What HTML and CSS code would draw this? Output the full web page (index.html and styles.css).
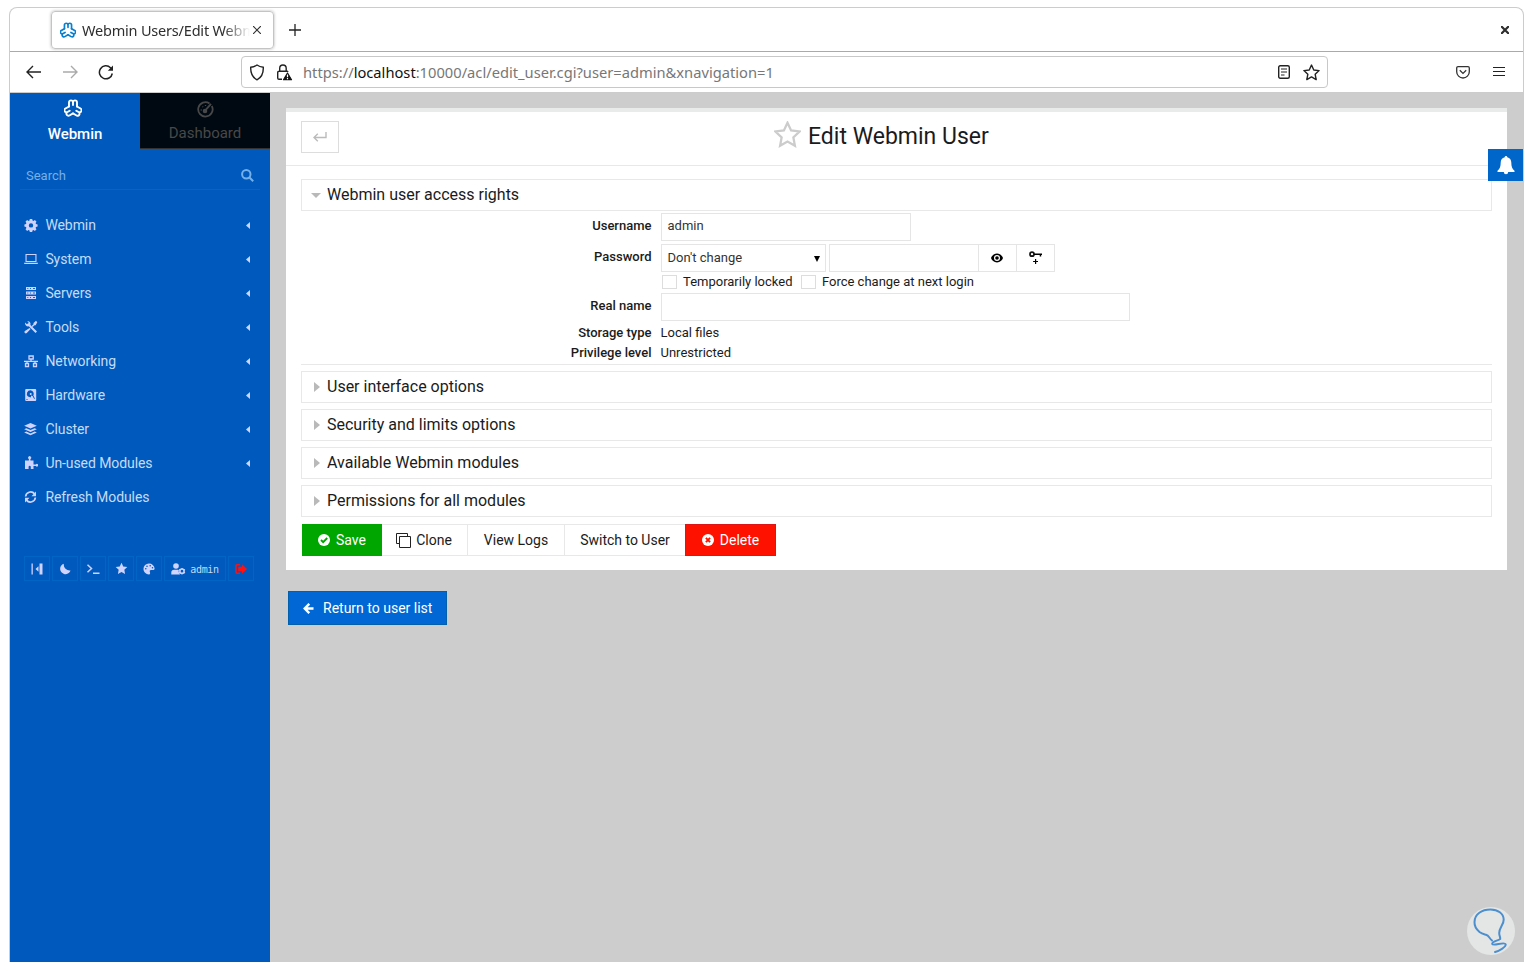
FILE: index.html
```html
<!DOCTYPE html>
<html lang="en">
<head>
    <meta charset="UTF-8">
    <meta name="viewport" content="width=device-width, initial-scale=1.0">
    <title>Webmin Users/Edit Webmin User</title>
    <link rel="stylesheet" href="styles.css">
</head>
<body>
    <!-- shared icons -->
    <svg class="defs" width="0" height="0">
        <symbol id="logo" viewBox="0 0 18 18">
            <g fill="none" stroke="currentColor" stroke-width="1.900" stroke-linecap="round" stroke-linejoin="round">
                <path id="lobe" d="M5 7.500V3.400a2 2 0 0 1 4 0V6M9 3.400a2 2 0 0 1 4 0V7.500"/>
                <use href="#lobe" transform="rotate(120 9 9.800)"/>
                <use href="#lobe" transform="rotate(240 9 9.800)"/>
            </g>
        </symbol>
        <symbol id="star" viewBox="0 0 24 24">
            <path d="M12 1.500l3.200 6.900 7.500.9-5.500 5.200 1.400 7.500-6.600-3.700-6.600 3.700 1.400-7.500L1.300 9.300l7.500-.9z"/>
        </symbol>
        <symbol id="right" viewBox="0 0 6 10"><path d="M0 0l6 5-6 5z"/></symbol>
        <symbol id="left" viewBox="0 0 4 7"><path d="M4 0v7L0 3.500z"/></symbol>
    </svg>

    <div class="window">
        <div class="tabbar">
            <div class="tab">
                <svg class="tab-logo" width="16" height="16"><use href="#logo"/></svg>
                <span class="tab-title">Webmin Users/Edit Webmin User</span>
                <svg width="8" height="8" viewBox="0 0 8 8" stroke="#333" stroke-width="1.2"><path d="M0 0l8 8M8 0L0 8"/></svg>
            </div>
            <svg class="new-tab" width="12" height="12" viewBox="0 0 12 12" stroke="#222" stroke-width="1.3"><path d="M6 0v12M0 6h12"/></svg>
            <svg class="close" width="8" height="8" viewBox="0 0 8 8" stroke="#2e2e2e" stroke-width="2.200"><path d="M0 0l8 8M8 0L0 8"/></svg>
        </div>

        <div class="navbar">
            <svg class="nav-back" width="16" height="14" viewBox="0 0 16 14" fill="none" stroke="#222" stroke-width="1.400"><path d="M15 7H1.500M7 1L1 7l6 6"/></svg>
            <svg class="nav-next" width="16" height="14" viewBox="0 0 16 14" fill="none" stroke="#aaa" stroke-width="1.400"><path d="M1 7h13.500M9 1l6 6-6 6"/></svg>
            <svg class="nav-reload" width="16" height="16" viewBox="0 0 16 16" fill="none" stroke="#222" stroke-width="1.500"><path d="M14.300 9.500A6.500 6.500 0 1 1 12.500 3.700l1.500 1.500"/><path d="M15 1.500v5.200H9.800z" fill="#222" stroke="none"/></svg>
            <div class="urlbar">
                <svg width="16" height="17" viewBox="0 0 16 17" fill="none" stroke="#222" stroke-width="1.400"><path d="M8 1c2 1.400 4 2 6.300 2.300C14.500 9 12.500 13.500 8 15.800 3.500 13.500 1.500 9 1.700 3.300 4 3 6 2.400 8 1z"/></svg>
                <svg class="lock" width="17" height="17" viewBox="0 0 17 17" fill="none" stroke="#222" stroke-width="1.400"><path d="M6 15.300H3a1.300 1.300 0 0 1-1.300-1.300V8.500A1.300 1.300 0 0 1 3 7.200h8.200a1 1 0 0 1 .8.700M3.700 7V4.300a3 3 0 0 1 6.500 0V7"/><path d="M11.500 9L15.500 15.700H7.500z" fill="#111" stroke="#111" stroke-width="1.200" stroke-linejoin="round"/><path d="M11.500 10.500v2.700M11.500 14v1.200" stroke="#fff" stroke-width="1.200"/></svg>
                <span class="url">https://<b>localhost</b>:10000/acl/edit_user.cgi?user=admin&amp;xnavigation=1</span>
                <svg class="reader" width="12" height="14" viewBox="0 0 12 14" fill="none" stroke="#222" stroke-width="1.400"><rect x=".7" y=".7" width="10.600" height="12.600" rx="1.500"/><path d="M3 4h6M3 7h6M3 10h3.500" stroke-width="1.200"/></svg>
                <svg width="17" height="17" fill="none" stroke="#222" stroke-width="2" stroke-linejoin="round"><use href="#star"/></svg>
            </div>
            <svg class="pocket" width="14" height="13" viewBox="0 0 14 13" fill="none" stroke="#333" stroke-width="1.300"><path d="M2 .7h10a1.300 1.300 0 0 1 1.300 1.300v3.700a6.300 6.300 0 0 1-12.600 0V2A1.300 1.300 0 0 1 2 .7z"/><path d="M3.800 4.300L7 7.400l3.200-3.100"/></svg>
            <svg class="burger" width="12" height="10" viewBox="0 0 12 10" stroke="#222" stroke-width="1"><path d="M0 .5h12M0 4.500h12M0 8.500h12"/></svg>
        </div>

        <div class="page">
            <aside class="sidebar">
                <div class="switch">
                    <div class="switch-item active">
                        <svg width="18" height="18"><use href="#logo"/></svg>
                        <span>Webmin</span>
                    </div>
                    <div class="switch-item">
                        <svg width="17" height="17" viewBox="0 0 17 17" fill="none" stroke="currentColor" stroke-width="1.800"><path d="M12.500 2.400A7.200 7.200 0 1 0 14.800 5"/><path d="M8.500 9.200L14 2.800"/><circle cx="8" cy="10" r="1.400" fill="currentColor"/><path d="M3.700 9h1M5.500 5.500l.6.600M8.500 4v1" stroke-width="1.300"/></svg>
                        <span>Dashboard</span>
                    </div>
                </div>

                <div class="search">
                    <span>Search</span>
                    <svg width="13" height="13" viewBox="0 0 13 13" fill="none" stroke="currentColor" stroke-width="2"><circle cx="5.300" cy="5.300" r="4.200"/><path d="M8.500 8.500l3.700 3.700"/></svg>
                </div>

                <ul class="menu">
                    <li>
                        <svg width="14" height="14" viewBox="0 0 14 14"><path fill-rule="evenodd" d="M5.800 1h2.400l.3 1.600 1 .4 1.400-.9 1.600 1.600-.9 1.400.4 1 1.600.3v2.200l-1.600.3-.4 1 .9 1.400-1.600 1.600-1.400-.9-1 .4-.3 1.600H5.800l-.3-1.600-1-.4-1.400.9-1.600-1.600.9-1.400-.4-1L.4 8.600V6.400L2 6.100l.4-1-.9-1.400 1.600-1.600 1.400.9 1-.4zM7 5.200a2.200 2.200 0 1 0 0 4.400 2.200 2.200 0 0 0 0-4.400z"/></svg>
                        <span>Webmin</span>
                        <svg class="arrow" width="4" height="7"><use href="#left"/></svg>
                    </li>
                    <li>
                        <svg width="14" height="14" viewBox="0 0 14 14"><path fill-rule="evenodd" d="M1.500 2h11v8h-11zM2.600 3.100v5.800h8.800V3.100zM0 10.800h14v.6l-.8.600H.8l-.8-.6z"/></svg>
                        <span>System</span>
                        <svg class="arrow" width="4" height="7"><use href="#left"/></svg>
                    </li>
                    <li>
                        <svg width="14" height="14" viewBox="0 0 14 14"><path d="M2 1h10v3H2zM2 5.500h10v3H2zM2 10h10v3H2z"/><path stroke="#0059bc" stroke-width=".9" d="M3.300 2.500h1M6 2.500h1M9 2.500h2M3.300 7h1M6 7h1M9 7h2M3.300 11.500h1M6 11.500h1M9 11.500h2"/></svg>
                        <span>Servers</span>
                        <svg class="arrow" width="4" height="7"><use href="#left"/></svg>
                    </li>
                    <li>
                        <svg width="14" height="14" viewBox="0 0 14 14"><path d="M1 2.600L2.600 4 4.300 3.600 4.500 2 3 .9a3.200 3.200 0 0 1 3.400 4L13 11.500 11.500 13 4.800 6.300A3.200 3.200 0 0 1 1 2.600z"/><path d="M13.300 2.200L12 .8 9.500 3v1.200L7.600 6.100l1 1L10.500 5.200h1.100zM5.600 8l1 1-3.800 4a1.300 1.300 0 0 1-1.900-1.900z"/></svg>
                        <span>Tools</span>
                        <svg class="arrow" width="4" height="7"><use href="#left"/></svg>
                    </li>
                    <li>
                        <svg class="outline" width="14" height="14" viewBox="0 0 14 14"><path d="M5 2h4.200v3H5zM1.500 9.500h3v3h-3zM9.500 9.500h3v3h-3zM7 5v2.200M0 7.300h14M3 7.300v2M11 7.300v2"/></svg>
                        <span>Networking</span>
                        <svg class="arrow" width="4" height="7"><use href="#left"/></svg>
                    </li>
                    <li>
                        <svg width="14" height="14" viewBox="0 0 14 14"><path fill-rule="evenodd" d="M2.200 1h9a1 1 0 0 1 1 1v10a1 1 0 0 1-1 1h-9a1 1 0 0 1-1-1V2a1 1 0 0 1 1-1zM6.700 2.200A3.700 3.700 0 0 0 4 8.600l2.700 1 .5-2.100 1.300.5 1.700 3 .7-.6-1.600-2.800a3.700 3.700 0 0 0-2.600-5.400zM6.700 5a1 1 0 1 1 0 2 1 1 0 0 1 0-2zM2.500 11h1v1h-1z"/></svg>
                        <span>Hardware</span>
                        <svg class="arrow" width="4" height="7"><use href="#left"/></svg>
                    </li>
                    <li>
                        <svg width="14" height="14" viewBox="0 0 14 14"><path d="M6.500 1l6.300 2.800-6.300 2.700L.2 3.800zM2.300 6.200l4.200 1.800 4.200-1.800 2.100 1-6.300 2.700L.2 7.200zM2.300 9.600l4.200 1.800 4.200-1.800 2.100 1-6.300 2.700-6.300-2.700z"/></svg>
                        <span>Cluster</span>
                        <svg class="arrow" width="4" height="7"><use href="#left"/></svg>
                    </li>
                    <li>
                        <svg width="14" height="14" viewBox="0 0 14 14"><path d="M1 4.500h3.900V3a1.500 1.500 0 1 1 1.500 0v1.500H9.500v4h2.400a1.300 1.300 0 1 1 0 1.500H9.500V13H6.800v-2.500a1.400 1.400 0 0 0-2.200 0V13H1z"/></svg>
                        <span>Un-used Modules</span>
                        <svg class="arrow" width="4" height="7"><use href="#left"/></svg>
                    </li>
                    <li>
                        <svg width="14" height="14" viewBox="0 0 14 14"><path fill="none" stroke="currentColor" stroke-width="1.700" d="M1.600 6.500a5 5 0 0 1 8.900-2.600M11.400 7.500a5 5 0 0 1-8.900 2.600"/><path d="M12 1.500v4.700H7.500zM1 12.500V7.800h4.500z"/></svg>
                        <span>Refresh Modules</span>
                    </li>
                </ul>

                <div class="tools">
                    <div class="tool"><svg width="12" height="12" viewBox="0 0 12 12"><path d="M.5.500h1.300v11H.5zM8.500.500h3v11h-3zM7.500 3.300v5.400L4.500 6z"/></svg></div>
                    <div class="tool"><svg width="12" height="12" viewBox="0 0 12 12"><path d="M4.800.8A6 6 0 0 0 11.500 7.500 5.300 5.300 0 1 1 4.800.8z"/></svg></div>
                    <div class="tool"><svg width="14" height="12" viewBox="0 0 14 12"><path fill="none" stroke="currentColor" stroke-width="1.500" d="M1.500 1.800L5.500 5.500 1.500 9.200M7 10.200H13.500"/></svg></div>
                    <div class="tool"><svg width="13" height="13"><use href="#star"/></svg></div>
                    <div class="tool"><svg width="12" height="12" viewBox="0 0 12 12"><path fill-rule="evenodd" d="M6 .5a5.600 5.600 0 0 1 5.600 5c0 1.300-.8 1.600-1.800 1.600H8c-1 0-1.500.8-1.200 1.600.4 1 .7 2.800-.9 2.800A5.500 5.500 0 0 1 6 .5zM2.800 5a.8.800 0 1 0 0 1.600.8.800 0 0 0 0-1.600zM4 2.400A.8.800 0 1 0 4 4a.8.800 0 0 0 0-1.600zm3.200-.4a.8.800 0 1 0 0 1.600.8.800 0 0 0 0-1.600zm2.300 2a.8.800 0 1 0 0 1.600.8.800 0 0 0 0-1.600z"/></svg></div>
                    <div class="tool user">
                        <svg width="15" height="12" viewBox="0 0 15 12"><circle cx="5" cy="3" r="2.800"/><path d="M.3 11.500V9.400a2.800 2.800 0 0 1 2.800-2.700h3.700l1 .4a4 4 0 0 0 1.200 4.400z"/><circle cx="11" cy="8.200" r="2.100" fill="none" stroke="currentColor" stroke-width="1.500"/><path d="M11 5v1.500M11 10v1.500M8 6.500l1.200.6M12.800 9.200l1.200.7M8 9.900l1.200-.7M12.800 7.200l1.200-.7" stroke="currentColor" stroke-width="1.200"/></svg>
                        <span>admin</span>
                    </div>
                    <div class="tool logout"><svg width="12" height="12" viewBox="0 0 12 12"><path fill="none" stroke="currentColor" stroke-width="1.500" d="M5 1.700H2.200A1.200 1.200 0 0 0 1 2.900v6.200a1.200 1.200 0 0 0 1.200 1.200H5"/><path d="M3.200 3.800H7V1.300L12 6l-5 4.700V8.200H3.200z"/></svg></div>
                </div>
            </aside>

            <main class="content">
                <div class="panel">
                    <div class="panel-head">
                        <div class="back"><svg width="14" height="10" viewBox="0 0 14 10" fill="none" stroke="#bbb" stroke-width="1.400"><path d="M13 0v5.500H1.500M4.800 1.700L1 5.500l3.800 3.800"/></svg></div>
                        <h1>
                            <svg width="27" height="27" fill="none" stroke="#ccc" stroke-width="2"><use href="#star"/></svg>
                            <span>Edit Webmin User</span>
                        </h1>
                    </div>

                    <div class="panel-body">
                        <div class="section open">
                            <svg class="down" width="10" height="5" viewBox="0 0 10 5"><path d="M0 0h10L5 5z"/></svg>
                            <span>Webmin user access rights</span>
                        </div>
                        <div class="form">
                            <div class="row">
                                <label>Username</label>
                                <div class="field username">admin</div>
                            </div>
                            <div class="row">
                                <label>Password</label>
                                <div class="field select"><span>Don't change</span><svg width="6" height="6" viewBox="0 0 6 6"><path d="M0 0h6L3 6z"/></svg></div>
                                <div class="field password"></div>
                                <div class="field icon"><svg width="12" height="10" viewBox="0 0 12 10"><path fill-rule="evenodd" d="M6 .5c3 0 5.200 2.200 6 4.500-.8 2.300-3 4.500-6 4.500S.8 7.300 0 5C.8 2.700 3 .5 6 .5zM6 2a3 3 0 1 0 0 6 3 3 0 0 0 0-6z"/><circle cx="6" cy="5" r="1.800"/></svg></div>
                                <div class="field icon"><svg width="13" height="13" viewBox="0 0 13 13"><circle cx="3" cy="3.200" r="2" fill="none" stroke="currentColor" stroke-width="1.700"/><path d="M5 2.400h8V4h-.8v1.500h-1.500V4H5zM6 8h1.200v1.900H9v1.200H7.200V13H6v-1.900H4.100V9.900H6z"/></svg></div>
                            </div>
                            <div class="row checks">
                                <i class="box"></i><span>Temporarily locked</span>
                                <i class="box"></i><span>Force change at next login</span>
                            </div>
                            <div class="row">
                                <label>Real name</label>
                                <div class="field realname"></div>
                            </div>
                            <div class="row plain">
                                <label>Storage type</label>
                                <span>Local files</span>
                            </div>
                            <div class="row plain">
                                <label>Privilege level</label>
                                <span>Unrestricted</span>
                            </div>
                        </div>

                        <div class="section"><svg width="6" height="10"><use href="#right"/></svg><span>User interface options</span></div>
                        <div class="section"><svg width="6" height="10"><use href="#right"/></svg><span>Security and limits options</span></div>
                        <div class="section"><svg width="6" height="10"><use href="#right"/></svg><span>Available Webmin modules</span></div>
                        <div class="section"><svg width="6" height="10"><use href="#right"/></svg><span>Permissions for all modules</span></div>

                        <div class="buttons">
                            <div class="btn save">
                                <svg width="12" height="12" viewBox="0 0 12 12"><circle cx="6" cy="6" r="6" fill="#fff"/><path d="M3 6l2.200 2.200L9.200 4" fill="none" stroke="#00a600" stroke-width="1.900"/></svg>
                                <span>Save</span>
                            </div>
                            <div class="btn clone">
                                <svg width="15" height="15" viewBox="0 0 15 15" fill="none" stroke="#222"><path d="M3.500 10.500h-3v-10h11v3"/><path d="M3.500 3.500h11v11h-11z"/></svg>
                                <span>Clone</span>
                            </div>
                            <div class="btn logs"><span>View Logs</span></div>
                            <div class="btn user-switch"><span>Switch to User</span></div>
                            <div class="btn delete">
                                <svg width="12" height="12" viewBox="0 0 12 12"><circle cx="6" cy="6" r="6" fill="#fff"/><path d="M3.900 3.900l4.200 4.200M8.100 3.900L3.900 8.100" stroke="#ff1100" stroke-width="2"/></svg>
                                <span>Delete</span>
                            </div>
                        </div>
                    </div>
                </div>

                <div class="return">
                    <svg width="11" height="11" viewBox="0 0 11 11" fill="none" stroke="#fff" stroke-width="2.400"><path d="M10.500 5.500H2M6.300 .8L1.700 5.500l4.600 4.700"/></svg>
                    <span>Return to user list</span>
                </div>
            </main>

            <div class="bell"><svg width="18" height="19" viewBox="0 0 18 19" fill="#fff"><path d="M9 0a1.300 1.300 0 0 1 1.300 1.300c2.500.6 4 2.600 4 5.200 0 4.200.9 6.200 3.200 8.200v1.300H.5v-1.300c2.300-2 3.200-4 3.200-8.200 0-2.600 1.500-4.600 4-5.200A1.300 1.300 0 0 1 9 0zM6.800 16h4.400a2.200 2.200 0 0 1-4.400 0z"/></svg></div>
            <div class="bulb"><svg width="48" height="48" viewBox="0 0 48 48" fill="none" stroke="#4d8fce" stroke-width="2" stroke-linecap="round"><path d="M25 33.500C22 31 22 28.500 19 27.700 16 27 15 27 12.500 25 9 22 7.300 19 7.500 15 7.500 7 15 2.500 23.500 2.500 31 2.500 36.500 6.500 36.700 12.500c.2 5-4.400 8-4.500 13.500 0 3 1.300 4 1 6-2 1.700-8.700 2.500-8 5 .8 2.800 12.500-3 13.500.3.500 2.700-7 6.700-10.700 7.700"/></svg></div>
        </div>
    </div>
</body>
</html>
```
FILE: styles.css
```css
:root {
    --blue: #0059bc;
    --line: #e8e8e8;
}

* {
    box-sizing: border-box;
}

body {
    margin: 0;
    padding: 7px 9px;
    background: #fff;
    font-family: Roboto, sans-serif;
    font-size: 13px;
    color: #1b1b1b;
}

svg {
    display: block;
    flex: none;
}

span {
    white-space: nowrap;
}

.defs {
    position: absolute;
}

.window {
    width: 1515px;
    height: 955px;
    border: 1px solid #ccc;
    border-bottom: 0;
    border-radius: 8px 8px 0 0;
}

/* browser chrome */
.tabbar {
    display: flex;
    align-items: center;
    height: 44px;
    padding: 0 14px 0 41px;
    border-bottom: 1px solid #aaa;
}

.tab {
    display: flex;
    align-items: center;
    width: 223px;
    height: 38px;
    padding: 0 12px 0 8px;
    border: 1px solid #c4c4c4;
    border-radius: 4px;
    box-shadow: 0 0 3px rgba(0, 0, 0, 0.3);
}

.tab-logo {
    color: #0a7fd0;
}

.tab-title {
    width: 168px;
    margin: 0 3px 0 6px;
    overflow: hidden;
    font-family: "Noto Sans", sans-serif;
    font-size: 14.5px;
    letter-spacing: -0.2px;
    color: #2e2e2e;
    -webkit-mask-image: linear-gradient(to right, #000 84%, transparent);
    mask-image: linear-gradient(to right, #000 84%, transparent);
}

.new-tab {
    margin-left: 15px;
}

.close {
    margin-left: auto;
}

.navbar {
    display: flex;
    align-items: center;
    height: 41px;
    padding: 0 18px 0 16px;
    border-bottom: 1px solid #ccc;
}

.nav-next {
    margin-left: 20px;
}

.nav-reload {
    margin-left: 20px;
}

.urlbar {
    display: flex;
    align-items: center;
    width: 1087px;
    height: 32px;
    margin-left: 127px;
    padding: 0 7px;
    border: 1px solid #c8c8c8;
    border-radius: 4px;
}

.lock {
    margin-left: 11px;
}

.url {
    margin-left: 10px;
    font-family: "Noto Sans", sans-serif;
    font-size: 14.7px;
    color: #777;
}

.url b {
    font-weight: 400;
    color: #111;
}

.reader {
    margin: 0 13px 0 auto;
}

.pocket {
    margin-left: auto;
}

.burger {
    margin-left: 23px;
}

/* page */
.page {
    position: relative;
    display: flex;
    height: 869px;
    background: #cdcdcd;
}

.sidebar {
    width: 260px;
    height: 869px;
    background: var(--blue);
    color: #c5dcf5;
}

.switch {
    display: flex;
}

.switch-item {
    display: flex;
    flex-direction: column;
    align-items: center;
    width: 130px;
    height: 56px;
    padding-top: 8px;
    border-bottom: 1px solid #333;
    background: #000911;
    color: #484848;
    font-size: 15px;
    line-height: 18px;
}

.switch-item span {
    margin-top: 6px;
}

.switch-item.active {
    padding-top: 6px;
    border-color: var(--blue);
    background: var(--blue);
    color: #fff;
    font-weight: 500;
}

.switch-item.active svg {
    margin-right: 4px;
}

.switch-item.active span {
    margin-top: 8px;
}

.search {
    display: flex;
    align-items: center;
    justify-content: space-between;
    height: 30px;
    margin: 11px 10px 0;
    padding: 2px 6px 0 6px;
    border-bottom: 1px solid #0065cf;
    color: #75b0e8;
}

.menu {
    margin: 18px 0 0;
    padding: 0;
    list-style: none;
    font-size: 14px;
    letter-spacing: -0.08px;
}

.menu li {
    display: flex;
    align-items: center;
    height: 34px;
    padding: 0 20px 0 14px;
}

.menu span {
    margin-left: 7.4px;
}

.menu svg,
.tools svg {
    fill: #d0d3ff;
    color: #d0d3ff;
}

.menu .outline {
    fill: none;
    stroke: #d0d3ff;
    stroke-width: 1.3;
}

.menu .arrow {
    margin-left: auto;
}

.tools {
    display: flex;
    gap: 2px;
    margin: 42px 0 0 14px;
}

.tool {
    display: flex;
    align-items: center;
    justify-content: center;
    width: 26px;
    height: 25px;
    border: 1px solid #0065c4;
}

.tool.user {
    width: 62px;
    gap: 4px;
    font-family: "DejaVu Sans Mono", monospace;
    font-size: 10px;
    letter-spacing: -0.3px;
}

.tool.user span {
    padding-top: 1px;
}

.tools .logout svg {
    fill: #f11;
    color: #f11;
}

.content {
    padding: 15px 16px 0;
}

.panel {
    width: 1221px;
    height: 462px;
    border-top: 4px solid #e9eaea;
    background: #fff;
}

.panel-head {
    display: flex;
    align-items: flex-start;
    height: 54px;
    padding: 9px 15px 0;
    border-bottom: 1px solid var(--line);
}

.back {
    display: flex;
    align-items: center;
    justify-content: center;
    width: 38px;
    height: 32px;
    border: 1px solid #ddd;
}

h1 {
    display: flex;
    align-items: flex-start;
    gap: 7px;
    margin: 0 0 0 435px;
    font-size: 23px;
    font-weight: 400;
    line-height: 31px;
}

.panel-body {
    padding: 13px 15px 0;
}

.section {
    display: flex;
    align-items: center;
    height: 32px;
    margin-bottom: 6px;
    padding-left: 12px;
    border: 1px solid var(--line);
    font-size: 16px;
}

.section span {
    padding-bottom: 2px;
}

.section.open {
    margin: 0;
    padding-left: 9px;
}

.section svg {
    margin-right: 7px;
    fill: #b9b9b9;
}

.section .down {
    margin-right: 6px;
}

.form {
    height: 154px;
    margin-bottom: 6px;
    padding-top: 2px;
    border-bottom: 1px solid var(--line);
}

.row {
    display: flex;
    height: 28px;
    margin-bottom: 3px;
}

.row label {
    width: 350.5px;
    margin-right: 9.5px;
    font-weight: 500;
    line-height: 25px;
    text-align: right;
}

.field {
    display: flex;
    align-items: center;
    height: 28px;
    padding: 0 5.5px;
    border: 1px solid #e5e5e5;
    color: #333;
}

.username {
    width: 250px;
    padding-bottom: 3px;
}

.select {
    justify-content: space-between;
    width: 165px;
    padding-right: 5px;
    margin-right: 3px;
}

.select span {
    padding-bottom: 1px;
}

.select svg {
    margin-top: 2px;
}

.password {
    width: 150px;
}

.realname {
    width: 469px;
}

.field.icon {
    justify-content: center;
    width: 39px;
    margin-left: -1px;
    padding: 0 1px 1px 0;
    color: #111;
}

.row.checks {
    align-items: center;
    height: 14px;
    margin: 0 0 4px;
    padding: 0 0 0 361px;
}

.box {
    width: 15px;
    height: 14px;
    margin-right: 6px;
    border: 1px solid #ddd;
}

.checks span {
    margin-right: 8.4px;
    padding-bottom: 2px;
}

.row.plain {
    height: 20px;
    margin: 0;
    line-height: 18px;
}

.plain label {
    margin-right: 9px;
    line-height: 18px;
}

.buttons {
    display: flex;
    margin: 7px 0 0 1px;
    font-size: 14px;
}

.btn {
    display: flex;
    align-items: center;
    justify-content: center;
    gap: 6px;
    height: 32px;
    border: 1px solid var(--line);
    border-left: 0;
}

.save {
    width: 80px;
    border: 0;
    background: #00a600;
    color: #fff;
}

.clone {
    width: 86px;
    gap: 5px;
    padding-right: 1px;
}

.logs {
    width: 97px;
}

.user-switch {
    width: 120px;
    border-right: 0;
}

.delete {
    width: 91px;
    border: 1px solid #df1515;
    background: #ff1100;
    color: #fff;
}

.return {
    display: flex;
    align-items: center;
    gap: 9px;
    width: 159px;
    height: 34px;
    margin: 21px 0 0 2px;
    padding-left: 14px;
    border: 1px solid #0060ab;
    background: #0067d4;
    color: #fff;
    font-size: 14px;
}

.bell {
    position: absolute;
    top: 56px;
    right: 0;
    display: flex;
    align-items: center;
    justify-content: center;
    width: 35px;
    height: 32px;
    background: #0066c9;
}

.bulb {
    position: absolute;
    right: 8px;
    bottom: 7px;
    border-radius: 50%;
    background: #e4e6e6;
}
```
